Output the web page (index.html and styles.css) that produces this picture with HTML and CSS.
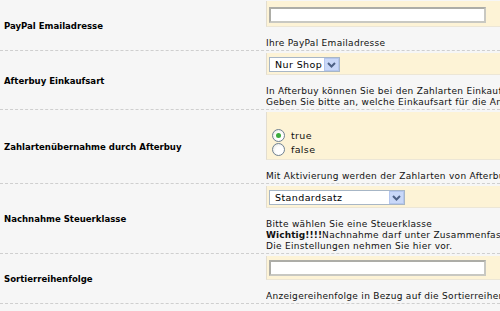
FILE: index.html
```html
<!DOCTYPE html>
<html>
<head>
<meta charset="utf-8">
<link rel="stylesheet" href="styles.css">
</head>
<body>
<div class="config">
  <div class="row first">
    <div class="label">PayPal Emailadresse</div>
    <div class="value">
      <div class="field"><span class="text-input"></span></div>
      <div class="desc">Ihre PayPal Emailadresse</div>
    </div>
  </div>
  <div class="row">
    <div class="label">Afterbuy Einkaufsart</div>
    <div class="value">
      <div class="field"><span class="select sel-short">Nur Shop<span class="drop"><svg width="9" height="6" viewBox="0 0 9 6"><path d="M1 1 L4.5 4.5 L8 1" fill="none" stroke="#4d6185" stroke-width="2"/></svg></span></span></div>
      <div class="desc">In Afterbuy können Sie bei den Zahlarten Einkaufsart festlegen.<br>Geben Sie bitte an, welche Einkaufsart für die Anzeige verwendet werden soll.</div>
    </div>
  </div>
  <div class="row">
    <div class="label">Zahlartenübernahme durch Afterbuy</div>
    <div class="value">
      <div class="field radios">
        <div class="blank"></div>
        <div class="radio-line"><span class="radio checked"></span>true</div>
        <div class="radio-line"><span class="radio"></span>false</div>
      </div>
      <div class="desc">Mit Aktivierung werden der Zahlarten von Afterbuy übernommen.</div>
    </div>
  </div>
  <div class="row">
    <div class="label">Nachnahme Steuerklasse</div>
    <div class="value">
      <div class="field"><span class="select sel-long">Standardsatz<span class="drop"><svg width="9" height="6" viewBox="0 0 9 6"><path d="M1 1 L4.5 4.5 L8 1" fill="none" stroke="#4d6185" stroke-width="2"/></svg></span></span></div>
      <div class="desc">Bitte wählen Sie eine Steuerklasse<br><b>Wichtig!!!!</b>Nachnahme darf unter Zusammenfassung nicht aktiviert sein.<br>Die Einstellungen nehmen Sie hier vor.</div>
    </div>
  </div>
  <div class="row">
    <div class="label">Sortierreihenfolge</div>
    <div class="value">
      <div class="field"><span class="text-input"></span></div>
      <div class="desc">Anzeigereihenfolge in Bezug auf die Sortierreihenfolge der Module.</div>
    </div>
  </div>
</div>
</body>
</html>
```

FILE: styles.css
```css
html, body {
  margin: 0;
  padding: 0;
  background: #f6f6f6;
  overflow: hidden;
}
body {
  font-family: "DejaVu Sans", Verdana, sans-serif;
  font-size: 9px;
  color: #111;
  width: 500px;
  height: 311px;
}
.config {
  display: flex;
  flex-direction: column;
  margin-top: 1px;
}
.row {
  display: grid;
  grid-template-columns: 266px 1fr;
  border-bottom: 1px dashed #cfcfcf;
}
.label {
  align-self: center;
  padding-left: 4px;
  font-family: "DejaVu Sans Condensed", "DejaVu Sans", sans-serif;
  font-weight: bold;
  font-size: 9.5px;
  color: #000;
}
.value {
  padding-top: 2px;
  padding-bottom: 1px;
  min-width: 0;
  overflow: hidden;
}
.field {
  background: #fdf3d6;
  border-left: 1px solid #e2ddd0;
  border-bottom: 1px solid #ece6d6;
  padding: 4px 0 3px 2px;
  display: flex;
  flex-direction: column;
  align-items: flex-start;
}
.first .field {
  margin-top: -3px;
  padding-top: 7px;
}
.desc {
  margin-top: 11px;
  line-height: 11px;
  letter-spacing: 0.3px;
  white-space: nowrap;
}
.desc b { font-weight: bold; letter-spacing: 0.1px; }
.text-input {
  display: block;
  width: 213px;
  height: 12px;
  background: #fff;
  border: 2px solid #c8c8c2;
  border-top-color: #adada7;
  border-left-color: #adada7;
}
.select {
  display: flex;
  align-items: center;
  justify-content: space-between;
  height: 13px;
  margin-bottom: -1px;
  background: #fff;
  border: 1px solid #a7b6c6;
  padding-left: 5px;
  font-size: 9.5px;
  letter-spacing: 0.4px;
  color: #000;
}
.sel-short { width: 64px; }
.sel-long { width: 129px; }
.drop {
  width: 15px;
  height: 13px;
  background: #c9d8f8;
  border: 1px solid #b4c6ee;
  box-sizing: border-box;
  display: flex;
  align-items: center;
  justify-content: center;
}
.radios { padding-left: 5px; }
.blank { height: 12px; }
.radio-line {
  display: flex;
  align-items: center;
  height: 14px;
  font-size: 9.5px;
  letter-spacing: 0.35px;
}
.radio {
  width: 11px;
  height: 11px;
  border-radius: 50%;
  border: 1px solid #6f8192;
  background: radial-gradient(circle at 60% 60%, #fff 40%, #e0e0da 100%);
  margin-right: 6px;
  position: relative;
}
.radio.checked::after {
  content: "";
  position: absolute;
  left: 3px;
  top: 3px;
  width: 5px;
  height: 5px;
  border-radius: 50%;
  background: #3cab3c;
}
```
